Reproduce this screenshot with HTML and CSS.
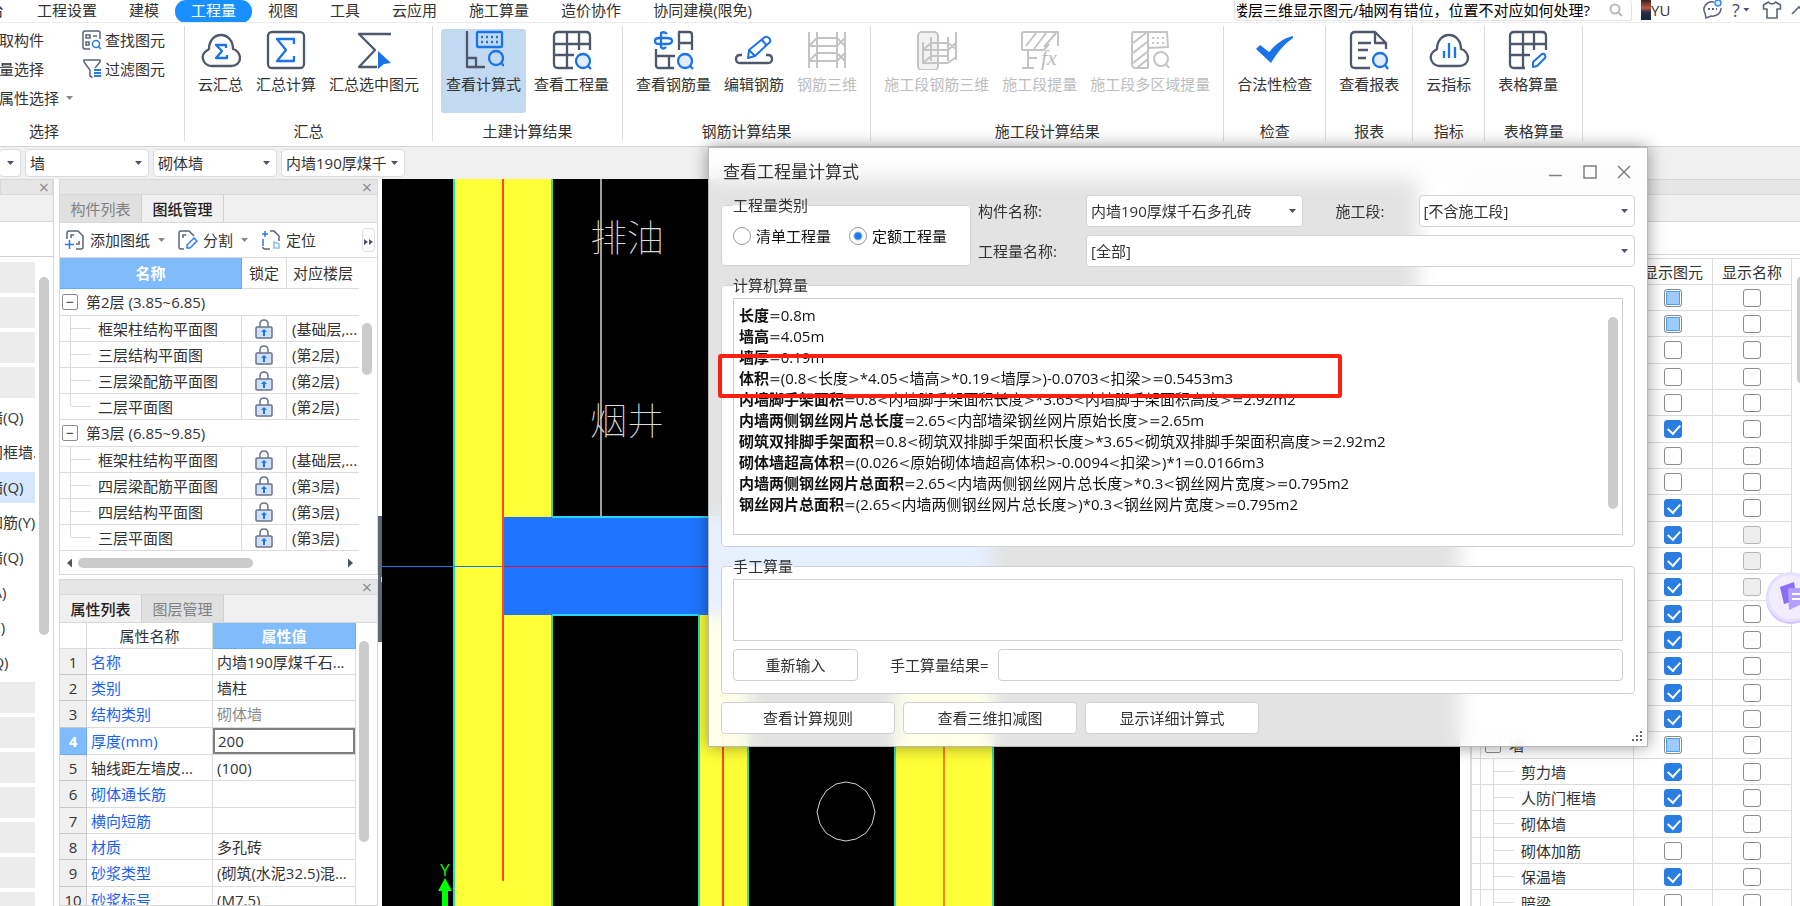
FILE: index.html
```html
<!DOCTYPE html>
<html lang="zh-CN">
<head>
<meta charset="utf-8">
<title>查看工程量计算式</title>
<link rel="stylesheet" href="styles.css">
</head>
<body>
<div class="app">
<header class="menubar">
  <nav class="menu">
    <a class="menu-item cut" href="#">台</a>
    <a class="menu-item" href="#">工程设置</a>
    <a class="menu-item" href="#">建模</a>
    <a class="menu-item active" href="#">工程量</a>
    <a class="menu-item" href="#">视图</a>
    <a class="menu-item" href="#">工具</a>
    <a class="menu-item" href="#">云应用</a>
    <a class="menu-item" href="#">施工算量</a>
    <a class="menu-item" href="#">造价协作</a>
    <a class="menu-item" href="#">协同建模(限免)</a>
  </nav>
  <div class="search">
    <span class="search-text">楼层三维显示图元/轴网有错位，位置不对应如何处理?</span>
    <svg width="14" height="14" viewBox="0 0 14 14" fill="none" stroke="#b9b9b9" stroke-width="2"><circle cx="6" cy="6" r="4.5"/><path d="M9.5 9.5 13 13"/></svg>
  </div>
  <div class="user">
    <span class="avatar"></span><span>YU</span>
  </div>
  <div class="tools">
    <svg width="22" height="22" viewBox="0 0 22 22" fill="none" stroke="#5b6478" stroke-width="1.5"><path d="M13 3A8.500 7.500 0 0 0 4 14l1 5 5-2a8.500 7.500 0 0 0 10-8"/><circle cx="17" cy="4" r="3" stroke="#3a8cf0" fill="#d8e8fd"/><path d="M7 10h2M11 10h2M15 10h1" stroke-width="2"/></svg>
    <span class="help">?</span><span class="caret"></span>
    <svg class="shirt" width="20" height="20" viewBox="0 0 20 20" fill="none" stroke="#5b6478" stroke-width="1.6" stroke-linejoin="round"><path d="M6.500 2 1.500 5v4H5v9h10V9h3.500V5l-5-3c-1 2.500-6 2.500-7 0z"/></svg>
    <svg width="14" height="14" viewBox="0 0 14 14" fill="none" stroke="#5b6478" stroke-width="1.600"><path d="M1 11 8 4l7 7"/></svg>
  </div>
</header>

<section class="ribbon">
  <div class="group group-select">
    <div class="select-cols">
      <div class="select-col cutoff">
        <button class="small">拾取构件</button>
        <button class="small">批量选择</button>
        <button class="small">按属性选择<span class="caret gray"></span></button>
      </div>
      <div class="select-col">
        <button class="small"><svg width="20" height="20" viewBox="0 0 20 20" fill="none" stroke="#5b6478" stroke-width="1.500"><path d="M8 19H3q-2 0-2-2V3q0-2 2-2h13q2 0 2 2v6"/><path d="M4 5h4v3H4zM4 12h3v3H4zM11 6h4"/><circle cx="14" cy="14" r="3.500" stroke="#2a7bea"/><path d="m16.500 16.500 2.500 2.500" stroke="#2a7bea"/></svg>查找图元</button>
        <button class="small"><svg width="20" height="20" viewBox="0 0 20 20" fill="none" stroke="#5b6478" stroke-width="1.500"><path d="M10.500 18.500 8 17v-6L2 3V1h16v2l-5 6"/><path d="M12 11h7M12 14h7M12 17h7" stroke="#2a7bea" stroke-width="2"/></svg>过滤图元</button>
      </div>
    </div>
    <p class="group-label">选择</p>
  </div>

  <div class="group">
    <div class="buttons">
      <button class="big"><svg class="icon" viewBox="0 0 40 40"><path d="M11 36C3 36-1 27 4 22c1-1 3-2 4-3C8 11 13 5 20 5s12 6 12 14c4 1 7 5 7 9 0 5-4 8-9 8z"/><path class="blue" d="M25 18v-3H15l6 6-6 7h11v-3"/></svg>云汇总</button>
      <button class="big"><svg class="icon" viewBox="0 0 40 40"><rect x="2" y="2" width="36" height="36" rx="4"/><path class="blue" d="M28 14V9H11l9 11-9 11h17v-5"/></svg>汇总计算</button>
      <button class="big"><svg class="icon" viewBox="0 0 40 40"><path d="M37 4H5l16 16L5 37h18"/><path class="fill" d="m24 21 13 12-7 1-6 5z"/></svg>汇总选中图元</button>
    </div>
    <p class="group-label">汇总</p>
  </div>

  <div class="group">
    <div class="buttons">
      <button class="big pressed"><svg class="icon" viewBox="0 0 40 40"><path d="M3 1v36h18M3 28h9v9"/><g class="blue"><rect x="13" y="2" width="25" height="15" rx="1"/><path d="M17 7h18M17 12h18" stroke-dasharray="2 3"/><circle cx="32" cy="28" r="7"/><path d="m37 33 3 3"/></g></svg>查看计算式</button>
      <button class="big"><svg class="icon" viewBox="0 0 40 40"><path d="M21 38H6q-4 0-4-4V6q0-4 4-4h28q4 0 4 4v14M2 14h36M2 25h20M15 2v36M27 2v18"/><g class="blue tint"><circle cx="31" cy="31" r="7"/><path d="m36 36 3 3"/></g></svg>查看工程量</button>
    </div>
    <p class="group-label">土建计算结果</p>
  </div>

  <div class="group">
    <div class="buttons">
      <button class="big"><svg class="icon" viewBox="0 0 40 40"><path d="M25 20V2h10q3 0 3 3v15M25 13h13M2 19v16q0 3 3 3h15M2 26h19M15 26v12"/><g class="blue"><path d="M5 8h8q5 0 5 3t-5 3H5q-4 0-4-3t4-3M13 4q-3-3-6-1v14q2 3 5 0"/></g><g class="blue tint"><circle cx="31" cy="31" r="7"/><path d="m36 36 3 3"/></g></svg>查看钢筋量</button>
      <button class="big"><svg class="icon" viewBox="0 0 40 40"><path d="M8 25H6q-4 0-4 4t4 4h28q4 0 4-4t-4-4h-2"/><path class="blue thin" d="m14 28 1-8L31 7q2-1 4 1t1 4L21 26zM28 10l5 6M15 20l6 6"/></svg>编辑钢筋</button>
      <button class="big" disabled><svg class="icon off" viewBox="0 0 40 40"><path d="M2 2v36M10 2v36M30 2v36M38 2v36M10 8h20l8 8M2 16h28M10 23h20l8 8M2 31h28M10 8l-8 8M10 23l-8 8M30 16l8-8M30 31l8-8"/></svg>钢筋三维</button>
    </div>
    <p class="group-label">钢筋计算结果</p>
  </div>

  <div class="group">
    <div class="buttons">
      <button class="big" disabled><svg class="icon off" viewBox="0 0 40 40"><rect x="1" y="2" width="20" height="38" rx="4" fill="#f2f2f2"/><path d="M6 12v22M14 7v24M31 7v24M39 2v28M14 13h17l8 6M6 20h25M14 26h17M6 33h25M14 13l-8 7M14 26l-8 7M31 20l8-7M31 33l8-6"/></svg>施工段钢筋三维</button>
      <button class="big" disabled><svg class="icon off" viewBox="0 0 40 40"><path d="M2 20V4q0-2 2-2h34v14M2 20h22l5-6M6 16 16 3M14 19 26 3M24 17 36 3M8 20v18M2 38h12M8 28h9"/><text class="fx" x="21" y="35">fx</text></svg>施工段提量</button>
      <button class="big" disabled><svg class="icon off" viewBox="0 0 40 40"><path d="M18 2H4Q2 2 2 4v30q0 4 4 4h12zM18 2h19l1 15-20 1M3 13 16 3M3 23l14-11M3 33l14-11M8 37l10-8"/><path d="M22 8h14M22 13h14" stroke-dasharray="2 3"/><circle cx="31" cy="29" r="7"/><path d="m36 34 3 4"/></svg>施工段多区域提量</button>
    </div>
    <p class="group-label">施工段计算结果</p>
  </div>

  <div class="group">
    <div class="buttons">
      <button class="big"><svg class="icon" viewBox="0 0 40 40"><path class="fill" d="m1 19 4-4 9 7C20 15 28 8 38 6v2C29 14 22 23 16 33z"/></svg>合法性检查</button>
    </div>
    <p class="group-label">检查</p>
  </div>
  <div class="group">
    <div class="buttons">
      <button class="big"><svg class="icon" viewBox="0 0 40 40"><path d="M21 38H6q-4 0-4-4V6q0-4 4-4h20l11 11v6M26 3v10h11M9 13h13M9 20h10M9 28h8"/><g class="blue tint"><circle cx="31" cy="30" r="7"/><path d="m36 35 3 4"/></g></svg>查看报表</button>
    </div>
    <p class="group-label">报表</p>
  </div>
  <div class="group">
    <div class="buttons">
      <button class="big"><svg class="icon" viewBox="0 0 40 40"><path d="M11 36C3 36-1 27 4 22c1-1 3-2 4-3C8 11 13 5 20 5s12 6 12 14c4 1 7 5 7 9 0 5-4 8-9 8z"/><path class="blue" d="M15 28v-7M20 28V13M26 28V17"/></svg>云指标</button>
    </div>
    <p class="group-label">指标</p>
  </div>
  <div class="group group-last">
    <div class="buttons">
      <button class="big"><svg class="icon" viewBox="0 0 40 40"><path d="M17 38H6q-4 0-4-4V6q0-4 4-4h28q4 0 4 4v14M2 14h36M2 25h20M15 2v36M26 2v18"/><path class="blue thin" d="M25 37v-5l9-8q2-1 3 1t0 3l-8 8z"/></svg>表格算量</button>
    </div>
    <p class="group-label">表格算量</p>
  </div>
</section>

<div class="filters">
  <select class="pick first" aria-label="楼层"><option></option></select>
  <select class="pick" aria-label="构件大类"><option>墙</option></select>
  <select class="pick" aria-label="构件类型"><option>砌体墙</option></select>
  <select class="pick" aria-label="构件"><option>内墙190厚煤千石多孔砖</option></select>
</div>

<main class="main">
  <aside class="nav">
    <div class="strip"><button class="x" aria-label="关闭">×</button></div>
    <div class="nav-bar"></div>
    <div class="nav-gap"></div>
    <div class="nav-body">
      <ul class="nav-list">
        <li class="blank"></li><li class="blank"></li><li class="blank"></li><li class="blank"></li>
        <li>剪力墙(Q)</li><li>人防门框墙...</li><li class="on">砌体墙(Q)</li><li>砌体加筋(Y)</li><li>保温墙(Q)</li><li>暗梁(A)</li><li>墙垛(E)</li><li>幕墙(Q)</li>
        <li class="blank"></li><li class="blank"></li><li class="blank"></li><li class="blank"></li><li class="blank"></li><li class="blank"></li><li class="blank"></li>
      </ul>
      <span class="vbar nav-scroll"></span>
    </div>
  </aside>

  <div class="panels">
    <section class="panel">
      <div class="strip"><button class="x" aria-label="关闭">×</button></div>
      <div class="tabs"><button class="tab">构件列表</button><button class="tab current">图纸管理</button></div>
      <div class="panel-tools">
        <button class="small"><svg width="20" height="20" viewBox="0 0 20 20" fill="none" stroke="#5b6478" stroke-width="1.500"><path d="M2 9V3q0-2 2-2h9l5 5v11q0 2-2 2h-5M6 8V5h3M14 11v3h-3"/><path d="M0 14.500h9M4.500 10v9" stroke="#2a7bea"/></svg>添加图纸<span class="caret gray"></span></button>
        <button class="small"><svg width="20" height="20" viewBox="0 0 20 20" fill="none" stroke="#5b6478" stroke-width="1.500"><path d="M6 19H3q-2 0-2-2V3q0-2 2-2h8l5 5M5 8V5h3"/><path d="M9 18v-3l7-7 3 3-7 7z" stroke="#2a7bea"/></svg>分割<span class="caret gray"></span></button>
        <button class="small"><svg width="20" height="20" viewBox="0 0 20 20" fill="none" stroke="#5b6478" stroke-width="1.500"><path d="M9 1h4l5 5v5M9 19H4q-2 0-2-2"/><path d="M2 9v7M1 4h6M4 1v6" stroke="#2a7bea"/><path d="M13 12v6h5v-4z" stroke="#8fbdf5"/></svg>定位</button>
        <button class="more" aria-label="更多"><svg width="10" height="8" viewBox="0 0 10 8" fill="#4b5468"><path d="M0 1l4 3-4 3zM5 1l4 3-4 3z"/></svg></button>
      </div>
      <div class="sheet-area">
        <table class="sheet">
          <colgroup><col class="c-name"><col class="c-lock"><col class="c-floor"></colgroup>
          <thead><tr><th class="hot">名称</th><th>锁定</th><th>对应楼层</th></tr></thead>
          <tbody>
            <tr class="branch"><td colspan="3"><span class="fold">−</span>第2层 (3.85~6.85)</td></tr>
            <tr><td class="leaf">框架柱结构平面图</td><td class="lock"><svg viewBox="0 0 18 20"><use href="#lock"/></svg></td><td>(基础层,...</td></tr>
            <tr><td class="leaf">三层结构平面图</td><td class="lock"><svg viewBox="0 0 18 20"><use href="#lock"/></svg></td><td>(第2层)</td></tr>
            <tr><td class="leaf">三层梁配筋平面图</td><td class="lock"><svg viewBox="0 0 18 20"><use href="#lock"/></svg></td><td>(第2层)</td></tr>
            <tr><td class="leaf end">二层平面图</td><td class="lock"><svg viewBox="0 0 18 20"><use href="#lock"/></svg></td><td>(第2层)</td></tr>
            <tr class="branch"><td colspan="3"><span class="fold">−</span>第3层 (6.85~9.85)</td></tr>
            <tr><td class="leaf">框架柱结构平面图</td><td class="lock"><svg viewBox="0 0 18 20"><use href="#lock"/></svg></td><td>(基础层,...</td></tr>
            <tr><td class="leaf">四层梁配筋平面图</td><td class="lock"><svg viewBox="0 0 18 20"><use href="#lock"/></svg></td><td>(第3层)</td></tr>
            <tr><td class="leaf">四层结构平面图</td><td class="lock"><svg viewBox="0 0 18 20"><use href="#lock"/></svg></td><td>(第3层)</td></tr>
            <tr><td class="leaf end">三层平面图</td><td class="lock"><svg viewBox="0 0 18 20"><use href="#lock"/></svg></td><td>(第3层)</td></tr>
          </tbody>
        </table>
        <span class="vbar sheet-scroll"></span>
      </div>
      <div class="hscroll"><span class="arrow left"></span><span class="hbar"></span><span class="arrow right"></span></div>
    </section>

    <section class="panel props-panel">
      <div class="strip"><button class="x" aria-label="关闭">×</button></div>
      <div class="tabs"><button class="tab current">属性列表</button><button class="tab">图层管理</button></div>
      <div class="sheet-area">
        <table class="props">
          <colgroup><col class="c-num"><col class="c-key"><col class="c-val"></colgroup>
          <thead><tr><th></th><th>属性名称</th><th class="hot">属性值</th></tr></thead>
          <tbody>
            <tr><th>1</th><td class="key">名称</td><td>内墙190厚煤千石...</td></tr>
            <tr><th>2</th><td class="key">类别</td><td>墙柱</td></tr>
            <tr><th>3</th><td class="key">结构类别</td><td class="dim">砌体墙</td></tr>
            <tr><th class="hot">4</th><td class="key">厚度(mm)</td><td class="edit"><input class="cell-input" aria-label="厚度(mm)" value="200"></td></tr>
            <tr><th>5</th><td>轴线距左墙皮...</td><td>(100)</td></tr>
            <tr><th>6</th><td class="key">砌体通长筋</td><td></td></tr>
            <tr><th>7</th><td class="key">横向短筋</td><td></td></tr>
            <tr><th>8</th><td class="key">材质</td><td>多孔砖</td></tr>
            <tr><th>9</th><td class="key">砂浆类型</td><td>(砌筑(水泥32.5)混...</td></tr>
            <tr><th>10</th><td class="key">砂浆标号</td><td>(M7.5)</td></tr>
          </tbody>
        </table>
        <span class="vbar props-scroll"></span>
      </div>
    </section>
  </div>

  <div class="splitter"><span class="handle"></span></div>

  <div class="canvas">
    <svg class="drawing" width="1080" height="728" viewBox="382 179 1080 728" fill="none">
      <path fill="#ffff38" d="M455 179h97v728h-97zM699 615h49v292h-49zM896 615h97v292h-97z"/>
      <path stroke="#28e0b8" stroke-width="2" d="M454 179v728M552 179v338M552 615v292M699 615v292M748 615v292M895 615v292M993 615v292"/>
      <path stroke="#a0a0a0" stroke-width="2" d="M601 179v338"/>
      <path fill="#1f75ff" d="M503 517h489v98H503z"/>
      <path stroke="#28d8f8" stroke-width="2" d="M552 517h440M552 615h147M748 615h147"/>
      <path stroke="#0a78ff" d="M382 566.500h121"/>
      <path stroke="#e01030" d="M503 566.500h489"/>
      <path stroke="#ff4a20" stroke-width="2" d="M503 179v702M723 615v292"/>
      <path stroke="#ff8020" stroke-width="2" d="M944 615v292"/>
      <path stroke="#d0d0d0" d="m846 782 10 2 10 7 6 10 3 11-3 12-6 9-10 6-10 2-10-2-10-6-6-9-3-12 3-11 6-10 10-7z"/>
      <path fill="#00ff00" d="m445 878 7 13h-4v16h-6v-16h-4z"/>
      <text class="axis" x="445" y="876">Y</text>
      <text class="cad" x="590" y="252">排油</text>
      <text class="cad" x="590" y="435">烟井</text>
      <path fill="#fff" d="M1418 179h44v340h-44z"/>
    </svg>
  </div>

  <aside class="display">
    <div class="strip"></div>
    <div class="display-bar"></div>
    <div class="display-gap"></div>
    <table class="layers">
      <colgroup><col><col class="c-check"><col class="c-check"></colgroup>
      <thead><tr><th></th><th>显示图元</th><th>显示名称</th></tr></thead>
      <tbody>
        <tr><td></td><td><input type="checkbox" class="partial" aria-label="显示图元"></td><td><input type="checkbox" aria-label="显示名称"></td></tr>
        <tr><td></td><td><input type="checkbox" class="partial" aria-label="显示图元"></td><td><input type="checkbox" aria-label="显示名称"></td></tr>
        <tr><td></td><td><input type="checkbox" aria-label="显示图元"></td><td><input type="checkbox" aria-label="显示名称"></td></tr>
        <tr><td></td><td><input type="checkbox" aria-label="显示图元"></td><td><input type="checkbox" aria-label="显示名称"></td></tr>
        <tr><td></td><td><input type="checkbox" aria-label="显示图元"></td><td><input type="checkbox" aria-label="显示名称"></td></tr>
        <tr><td></td><td><input type="checkbox" checked aria-label="显示图元"></td><td><input type="checkbox" aria-label="显示名称"></td></tr>
        <tr><td></td><td><input type="checkbox" aria-label="显示图元"></td><td><input type="checkbox" aria-label="显示名称"></td></tr>
        <tr><td></td><td><input type="checkbox" aria-label="显示图元"></td><td><input type="checkbox" aria-label="显示名称"></td></tr>
        <tr><td></td><td><input type="checkbox" checked aria-label="显示图元"></td><td><input type="checkbox" aria-label="显示名称"></td></tr>
        <tr><td></td><td><input type="checkbox" checked aria-label="显示图元"></td><td><input type="checkbox" disabled aria-label="显示名称"></td></tr>
        <tr><td></td><td><input type="checkbox" checked aria-label="显示图元"></td><td><input type="checkbox" disabled aria-label="显示名称"></td></tr>
        <tr><td></td><td><input type="checkbox" checked aria-label="显示图元"></td><td><input type="checkbox" disabled aria-label="显示名称"></td></tr>
        <tr><td></td><td><input type="checkbox" checked aria-label="显示图元"></td><td><input type="checkbox" aria-label="显示名称"></td></tr>
        <tr><td></td><td><input type="checkbox" checked aria-label="显示图元"></td><td><input type="checkbox" aria-label="显示名称"></td></tr>
        <tr><td></td><td><input type="checkbox" checked aria-label="显示图元"></td><td><input type="checkbox" aria-label="显示名称"></td></tr>
        <tr><td></td><td><input type="checkbox" checked aria-label="显示图元"></td><td><input type="checkbox" aria-label="显示名称"></td></tr>
        <tr><td></td><td><input type="checkbox" checked aria-label="显示图元"></td><td><input type="checkbox" aria-label="显示名称"></td></tr>
        <tr><td class="parent"><span class="fold">−</span>墙</td><td><input type="checkbox" class="partial" aria-label="显示图元 墙"></td><td><input type="checkbox" aria-label="显示名称 墙"></td></tr>
        <tr><td class="child">剪力墙</td><td><input type="checkbox" checked aria-label="显示图元 剪力墙"></td><td><input type="checkbox" aria-label="显示名称 剪力墙"></td></tr>
        <tr><td class="child">人防门框墙</td><td><input type="checkbox" checked aria-label="显示图元 人防门框墙"></td><td><input type="checkbox" aria-label="显示名称 人防门框墙"></td></tr>
        <tr><td class="child">砌体墙</td><td><input type="checkbox" checked aria-label="显示图元 砌体墙"></td><td><input type="checkbox" aria-label="显示名称 砌体墙"></td></tr>
        <tr><td class="child">砌体加筋</td><td><input type="checkbox" aria-label="显示图元 砌体加筋"></td><td><input type="checkbox" aria-label="显示名称 砌体加筋"></td></tr>
        <tr><td class="child">保温墙</td><td><input type="checkbox" checked aria-label="显示图元 保温墙"></td><td><input type="checkbox" aria-label="显示名称 保温墙"></td></tr>
        <tr><td class="child">暗梁</td><td><input type="checkbox" aria-label="显示图元 暗梁"></td><td><input type="checkbox" aria-label="显示名称 暗梁"></td></tr>
      </tbody>
    </table>
    <span class="vbar layers-scroll"></span>
  </aside>
</main>

<section class="dialog" role="dialog" aria-labelledby="dialog-title">
  <div class="titlebar">
    <h1 id="dialog-title">查看工程量计算式</h1>
    <button class="win" aria-label="最小化"><svg width="14" height="14" viewBox="0 0 14 14"><path d="M0 10.500h13"/></svg></button>
    <button class="win" aria-label="最大化"><svg width="14" height="14" viewBox="0 0 14 14"><path d="M1 1h12v12H1z"/></svg></button>
    <button class="win" aria-label="关闭"><svg width="14" height="14" viewBox="0 0 14 14"><path d="m1 1 12 12M13 1 1 13"/></svg></button>
  </div>
  <div class="options">
    <fieldset class="kind">
      <legend>工程量类别</legend>
      <div class="radios">
        <label class="radio"><input type="radio" name="kind">清单工程量</label>
        <label class="radio"><input type="radio" name="kind" checked>定额工程量</label>
      </div>
    </fieldset>
    <div class="fields">
      <label for="part">构件名称:</label>
      <select class="pick" id="part"><option>内墙190厚煤千石多孔砖</option></select>
      <label class="stage" for="stage">施工段:</label>
      <select class="pick" id="stage"><option>[不含施工段]</option></select>
      <label for="quantity">工程量名称:</label>
      <select class="pick wide" id="quantity"><option>[全部]</option></select>
    </div>
  </div>
  <fieldset class="machine">
    <legend>计算机算量</legend>
    <div class="result">
      <div class="lines">
        <p><b>长度</b><i>=</i>0.8m</p>
        <p><b>墙高</b><i>=</i>4.05m</p>
        <p><b>墙厚</b><i>=</i>0.19m</p>
        <p><b>体积</b><i>=</i>(0.8<i>&lt;</i>长度<i>&gt;</i>*4.05<i>&lt;</i>墙高<i>&gt;</i>*0.19<i>&lt;</i>墙厚<i>&gt;</i>)-0.0703<i>&lt;</i>扣梁<i>&gt;=</i>0.5453m3</p>
        <p><b>内墙脚手架面积</b><i>=</i>0.8<i>&lt;</i>内墙脚手架面积长度<i>&gt;</i>*3.65<i>&lt;</i>内墙脚手架面积高度<i>&gt;=</i>2.92m2</p>
        <p><b>内墙两侧钢丝网片总长度</b><i>=</i>2.65<i>&lt;</i>内部墙梁钢丝网片原始长度<i>&gt;=</i>2.65m</p>
        <p><b>砌筑双排脚手架面积</b><i>=</i>0.8<i>&lt;</i>砌筑双排脚手架面积长度<i>&gt;</i>*3.65<i>&lt;</i>砌筑双排脚手架面积高度<i>&gt;=</i>2.92m2</p>
        <p><b>砌体墙超高体积</b><i>=</i>(0.026<i>&lt;</i>原始砌体墙超高体积<i>&gt;</i>-0.0094<i>&lt;</i>扣梁<i>&gt;</i>)*1<i>=</i>0.0166m3</p>
        <p><b>内墙两侧钢丝网片总面积</b><i>=</i>2.65<i>&lt;</i>内墙两侧钢丝网片总长度<i>&gt;</i>*0.3<i>&lt;</i>钢丝网片宽度<i>&gt;=</i>0.795m2</p>
        <p><b>钢丝网片总面积</b><i>=</i>(2.65<i>&lt;</i>内墙两侧钢丝网片总长度<i>&gt;</i>)*0.3<i>&lt;</i>钢丝网片宽度<i>&gt;=</i>0.795m2</p>
      </div>
      <span class="vbar result-scroll"></span>
    </div>
  </fieldset>
  <fieldset class="manual">
    <legend>手工算量</legend>
    <textarea class="formula" aria-label="手工算量"></textarea>
    <div class="manual-row">
      <button class="btn">重新输入</button>
      <label for="manual-result">手工算量结果=</label>
      <input class="text" id="manual-result">
    </div>
  </fieldset>
  <div class="actions">
    <button class="btn">查看计算规则</button>
    <button class="btn">查看三维扣减图</button>
    <button class="btn">显示详细计算式</button>
  </div>
  <svg class="grip" width="11" height="11" viewBox="0 0 11 11" fill="#666"><path d="M8 0h2v2H8zM8 4h2v2H8zM4 4h2v2H4zM8 8h2v2H8zM4 8h2v2H4zM0 8h2v2H0z"/></svg>
  <span class="marker"></span>
</section>

<button class="floating" aria-label="批注">
  <svg width="36" height="36" viewBox="0 0 36 36"><path fill="#8a6cf5" d="m4 8 14-5 3 18-13 4z"/><path fill="#b3a0fa" d="M12 11q0-2 2-2h20v22l-10-5-11 5z"/><path stroke="#fff" stroke-width="2" d="M16 15h14M16 20h10"/></svg>
</button>
</div>

<svg class="defs" width="0" height="0">
  <symbol id="lock" viewBox="0 0 18 20"><path fill="none" stroke="#6a7488" stroke-width="1.500" d="M5 8V5q0-4 4-4t4 4v3"/><rect x="1" y="8" width="16" height="11" rx="1" fill="#cfe0fb" stroke="#6a7488" stroke-width="1.500"/><path fill="#1a73e8" d="m9 10 3 3h-2v4H8v-4H6z"/></symbol>
</svg>
</body>
</html>
```

FILE: styles.css
```css
* { box-sizing: border-box; }
body, p, h1, ul { margin: 0; padding: 0; }
body, button, input, select, textarea {
  font-family: "Open Sans", "Noto Sans CJK SC", sans-serif;
  font-size: 15px;
  line-height: 20px;
  color: #333;
}
body { overflow: hidden; background: #fff; }
button { border: 0; padding: 0; background: none; white-space: nowrap; }
a { color: inherit; text-decoration: none; }
table { border-collapse: separate; border-spacing: 0; table-layout: fixed; }
td, th { padding: 0; font-weight: 400; white-space: nowrap; overflow: hidden; }
.defs { position: absolute; }
.app { display: flex; flex-direction: column; height: 100vh; overflow: hidden; position: relative; }

/* menu bar */
.menubar { display: flex; height: 23px; flex: none; border-bottom: 1px solid #ececec; overflow: hidden; }
.menu { display: flex; flex: 1; }
.menu-item { padding: 0 16px; height: 23px; line-height: 21px; white-space: nowrap; }
.menu-item.cut { width: 21px; padding: 0; text-indent: -11px; overflow: hidden; }
.menu-item.active { background: #1890ff; color: #fff; border-radius: 11px; }
.search { display: flex; align-items: center; width: 398px; height: 21px; padding: 0 8px 0 2px; border: 1px solid #e4e4e4; border-top: 0; border-radius: 3px; color: #000; justify-content: space-between; }
.search-text { width: 353px; overflow: hidden; white-space: nowrap; display: flex; justify-content: flex-end; line-height: 20px; }
.user { display: flex; margin-left: 9px; width: 60px; line-height: 20px; }
.avatar { width: 10px; height: 20px; background: linear-gradient(#3a2030, #c05a3a 40%, #23304c 60%, #1a2438); }
.tools { display: flex; align-items: center; width: 99px; height: 19px; overflow: hidden; }
.tools svg { flex: none; }
.help { margin-left: 9px; font-size: 18px; color: #4b5468; }
.shirt { margin: 0 9px 0 12px; }
.caret { display: inline-block; flex: none; width: 7px; height: 4px; background: #4b5468; clip-path: polygon(0 0, 100% 0, 50% 100%); margin-left: 3px; }
.caret.gray { background: #8a8a8a; }

/* ribbon */
.ribbon { display: flex; flex: none; height: 124px; padding: 3px 0 5px; border-bottom: 1px solid #d4d4d4; overflow: hidden; }
.group { display: flex; flex-direction: column; justify-content: space-between; padding: 3px 8px 0; border-right: 1px solid #dcdcdc; flex: none; }
.group-last { min-width: 98px; }
.group-label { text-align: center; line-height: 20px; }
.buttons { display: flex; gap: 3px; }
.big { display: flex; flex-direction: column; align-items: center; gap: 4px; height: 84px; padding: 1px 5px 0; border-radius: 3px; }
.big.pressed { background: #c2d9f2; }
.big:disabled { color: #bdbdbd; }
.icon { width: 40px; height: 40px; fill: none; stroke: #4f586b; stroke-width: 2.300; stroke-linejoin: round; }
.icon .blue { stroke: #1a73e8; }
.icon .tint { fill: #e3edfc; }
.icon .thin { stroke-width: 2; }
.icon .fill { fill: #1a73e8; stroke: none; }
.icon.off { stroke: #c4c4c4; stroke-width: 2; }
.icon .fx { font: italic 22px "Liberation Serif", serif; fill: #bdbdbd; stroke: none; }
.group-select { width: 185px; padding: 0; }
.group-select .group-label { text-align: left; padding-left: 29px; }
.select-cols { display: flex; gap: 9px; padding-top: 4px; }
.select-col { display: flex; flex-direction: column; gap: 9px; align-items: flex-start; }
.select-col.cutoff { margin-left: -16px; }
.small { display: flex; align-items: center; gap: 4px; height: 20px; }
.select-col:last-child .small { gap: 3px; }

/* drop-downs */
.pick {
  appearance: none; width: 124px; height: 28px; padding: 0 18px 0 4px; border: 1px solid #d8dce2; border-radius: 4px;
  background: #fff url("data:image/svg+xml,%3Csvg xmlns='http://www.w3.org/2000/svg' width='7' height='4'%3E%3Cpath d='M0 0h7L3.500 4z' fill='%234b5468'/%3E%3C/svg%3E") no-repeat right 6px center;
  overflow: hidden;
}
.filters { display: flex; gap: 4px; flex: none; height: 32px; padding-top: 2px; background: #f0f0f0; }
.filters .first { width: 21px; padding: 0; border-left: 0; }

/* working area */
.main { display: flex; flex: 1; min-height: 0; }
.strip { display: flex; justify-content: flex-end; align-items: center; height: 16px; padding-right: 4px; background: #e6e6e6; border: 1px solid #d8d8d8; flex: none; }
.x { width: 12px; font-size: 18px; line-height: 12px; color: #8c8c8c; }
.vbar { width: 10px; border-radius: 5px; background: #cbcbcb; flex: none; }
.nav { width: 54px; flex: none; border-right: 1px solid #d8d8d8; overflow: hidden; }
.nav .strip { padding-right: 2px; }
.nav-bar { height: 27px; background: #f0f0f0; border-bottom: 1px solid #d8d8d8; }
.nav-gap { height: 35px; border-bottom: 1px solid #d0d0d0; }
.nav-body { display: flex; gap: 4px; padding-top: 5px; }
.nav-list { width: 35px; list-style: none; display: flex; flex-direction: column; gap: 4px; }
.nav-list li { height: 31px; line-height: 31px; text-indent: -42px; overflow: hidden; white-space: nowrap; }
.nav-list .blank { background: #ececec; }
.nav-list .on { background: #d5e7fe; }
.nav-scroll { height: 358px; margin-top: 15px; }

.panels { width: 319px; margin-left: 5px; flex: none; display: flex; flex-direction: column; gap: 4px; }
.panel { border: 1px solid #d8d8d8; border-top: 0; display: flex; flex-direction: column; }
.panel .strip { margin: 0 -1px; }
.props-panel { flex: 1; min-height: 0; overflow: hidden; }
.tabs { display: flex; height: 28px; background: #f0f0f0; border-bottom: 1px solid #d8d8d8; flex: none; }
.tab { width: 82px; background: #e0e0e0; border: 1px solid #cccfd4; border-width: 0 1px 0 0; color: #808080; }
.tab.current { background: #f0f0f0; color: #222; font-weight: 500; }
.panel-tools { display: flex; align-items: center; height: 35px; padding: 0 2px 0 5px; border-bottom: 1px solid #d8d8d8; gap: 13px; }
.panel-tools .small { gap: 5px; }
.more { margin-left: auto; width: 13px; height: 24px; border: 1px solid #e0e0e0; border-radius: 4px; }
.sheet-area { display: flex; gap: 3px; }
.sheet { width: 299px; }
.c-name { width: 182px; }
.c-lock { width: 45px; }
.sheet th { height: 31px; border-right: 1px solid #dcdcdc; border-bottom: 1px solid #dcdcdc; }
.sheet th:last-child { border-right: 0; }
.sheet td { height: 26px; padding-left: 5px; border-bottom: 1px solid #dcdcdc; }
.sheet .branch td { height: 27px; padding-left: 2px; }
.sheet .leaf {
  padding-left: 38px; border-right: 1px solid #dcdcdc;
  background: linear-gradient(#dcdcdc, #dcdcdc) 10px 0 / 1px 100% no-repeat, linear-gradient(#dcdcdc, #dcdcdc) 11px 12px / 20px 1px no-repeat;
}
.sheet .leaf.end { background-size: 1px 12px, 20px 1px; }
.sheet .lock { padding: 0; text-align: center; border-right: 1px solid #dcdcdc; line-height: 0; }
.lock svg { width: 18px; height: 20px; }
.fold { display: inline-block; width: 16px; height: 16px; margin-right: 8px; border: 1px solid #8c8c8c; border-radius: 2px; line-height: 13px; text-align: center; font-size: 14px; background: #fff; vertical-align: 1px; }
.sheet .hot, .props .hot { background: #80bbfb; color: #fff; font-weight: 700; border-color: #6aaaf0; }
.sheet-scroll { height: 52px; margin-top: 65px; }
.hscroll { display: flex; align-items: center; height: 23px; padding: 1px 24px 0 7px; gap: 6px; }
.hbar { width: 175px; height: 10px; border-radius: 5px; background: #cbcbcb; }
.arrow { width: 5px; height: 9px; background: #4b5468; }
.arrow.left { clip-path: polygon(100% 0, 100% 100%, 0 50%); }
.arrow.right { clip-path: polygon(0 0, 100% 50%, 0 100%); margin-left: auto; }

.props { width: 296px; flex: none; }
.c-num { width: 27px; }
.c-key { width: 126px; }
.props th, .props td { height: 26px; border-right: 1px solid #dcdcdc; border-bottom: 1px solid #dcdcdc; }
.props td { padding-left: 4px; }
.props tbody tr:nth-child(3n) > * { height: 27px; }
.props tbody th { background: #f0f0f0; border-color: #c8c8c8; }
.props tbody .hot { background: #80bbfb; }
.props .key { color: #1a62f5; }
.props .dim { color: #8c8c8c; }
.props .edit { padding: 0; }
.cell-input { display: block; width: 100%; height: 26px; padding: 0 3px; border: 2px solid #7f7f7f; border-radius: 0; outline: 0; }
.props-scroll { height: 201px; margin-top: 18px; }

.splitter { width: 4px; flex: none; padding-top: 337px; }
.handle { display: block; width: 6px; height: 126px; background: linear-gradient(#d5d8dd, #d5d8dd) right center / 3px 5px no-repeat #5c6675; }
.canvas { flex: 1; min-width: 0; background: #000; overflow: hidden; }
.drawing { display: block; }
.axis { font-size: 17px; fill: #00ff00; text-anchor: middle; }
.cad { font-family: "Noto Sans CJK SC", sans-serif; font-weight: 100; font-size: 37px; fill: #dcdcdc; }

/* display settings */
.display { width: 340px; flex: none; display: grid; grid-template-columns: 332px 10px; grid-template-rows: 16px 27px 37px auto; overflow: hidden; align-content: start; }
.display .strip, .display-bar, .display-gap { grid-column: 1 / 3; }
.display-bar { background: #f0f0f0; border-bottom: 1px solid #d8d8d8; }
.display-gap { border-bottom: 1px solid #dcdcdc; box-shadow: inset 0 -3px #fff, inset 0 -4px #d8d8d8; }
.layers { margin-left: 10px; width: 322px; border-left: 2px solid #dcdcdc; }
.c-check { width: 79px; }
.layers th, .layers td { height: 26px; border-right: 1px solid #dcdcdc; border-bottom: 1px solid #dcdcdc; text-align: center; }
.layers tbody tr:nth-child(3n) > * { height: 27px; }
.layers td:first-child { text-align: left; }
.layers .parent { padding-left: 13px; background: linear-gradient(#dcdcdc, #dcdcdc) 8px 0 / 1px 100% no-repeat; }
.layers .child {
  padding-left: 49px;
  background: linear-gradient(#dcdcdc, #dcdcdc) 8px 0 / 1px 100% no-repeat, linear-gradient(#dcdcdc, #dcdcdc) 21px 0 / 1px 100% no-repeat, linear-gradient(#dcdcdc, #dcdcdc) 22px 12px / 20px 1px no-repeat;
}
.layers input { appearance: none; display: block; width: 18px; height: 18px; margin: 0 auto; border: 1px solid #8c8c8c; border-radius: 3px; background: #fff; }
.layers input:checked { border-color: #2a7de1; background: #2a7de1; }
.layers input:checked::after { content: ""; display: block; width: 6px; height: 10px; margin: 1px 0 0 5px; border: solid #fff; border-width: 0 2px 2px 0; transform: rotate(42deg); }
.layers input:disabled { background: #eee; border-color: #b4b4b4; }
.layers input.partial { background: #9ecbff; border: 1px solid #8c8c8c; box-shadow: inset 0 0 0 1px #fff, inset 0 0 0 2px #4a9cf5; }
.layers-scroll { margin: 17px 0 0 5px; height: 108px; }

/* calculation window */
.dialog {
  position: absolute; left: 708px; right: 152px; top: 147px; padding: 0 12px 12px; border: 1px solid #b8b8b8;
  background: rgba(255, 255, 255, .89); backdrop-filter: blur(10px); box-shadow: 0 0 16px rgba(0, 0, 0, .4);
}
.titlebar { display: flex; align-items: center; gap: 20px; height: 47px; padding: 1px 4px 0 2px; }
.titlebar h1 { flex: 1; font-size: 17px; font-weight: 400; line-height: 24px; }
.win { width: 14px; height: 14px; }
.win svg { display: block; fill: none; stroke: #808080; stroke-width: 1.500; }
fieldset { margin: 0; padding: 0 11px; border: 1px solid #d0d0d0; border-radius: 4px; background: #fff; min-width: 0; }
legend { padding: 0; line-height: 20px; height: 20px; }
.options { display: flex; gap: 7px; }
.kind { width: 250px; height: 71px; }
.radios { display: flex; gap: 18px; padding-top: 11px; }
.radio { display: flex; align-items: center; gap: 5px; color: #111; white-space: nowrap; }
.radio input { appearance: none; flex: none; width: 18px; height: 18px; margin: 0; border: 1px solid #9a9a9a; border-radius: 50%; background: #fff; }
.radio input:checked { background: radial-gradient(circle, #1f7ae8 3px, #fff 5px); }
.fields { flex: 1; display: grid; grid-template-columns: 108px 1fr 116px 1fr; row-gap: 8px; align-items: center; }
.fields .pick { width: 100%; height: 32px; border-color: #cfd3da; }
.fields .wide { grid-column: 2 / 5; }
.stage { padding-left: 33px; }
.machine { margin-top: 8px; padding-bottom: 11px; }
.result { display: flex; justify-content: space-between; height: 237px; margin-top: 3px; padding: 6px 4px 6px 5px; border: 1px solid #cfcfcf; background: #fff; }
.lines { color: #111; line-height: 21px; white-space: nowrap; }
.lines p { height: 21px; }
.lines i { font-family: "DejaVu Sans", sans-serif; font-size: 14px; font-style: normal; line-height: 1; color: #444; }
.result-scroll { height: 192px; margin-top: 12px; }
.manual { margin-top: 9px; padding-bottom: 12px; }
.formula { display: block; width: 100%; height: 62px; margin: 3px 0 8px; border: 1px solid #cfcfcf; resize: none; }
.manual-row { display: flex; align-items: center; }
.manual-row .btn { width: 125px; margin-right: 32px; }
.btn { height: 32px; border: 1px solid #d0d0d0; border-radius: 4px; background: #fff; }
.text { flex: 1; height: 32px; margin-left: 9px; border: 1px solid #cfcfcf; border-radius: 4px; }
.actions { display: flex; gap: 8px; margin-top: 8px; }
.actions .btn { width: 174px; }
.grip { position: absolute; right: 4px; bottom: 4px; }
.marker { position: absolute; left: 9px; top: 206px; width: 624px; height: 44px; border: 4px solid #ff1e10; border-radius: 3px; }

.floating { position: absolute; right: -16px; top: 572px; width: 50px; height: 50px; border-radius: 50%; background: #f1edff; border: 3px solid #e6dfff; box-shadow: 0 2px 0 #cfc3fb; padding: 4px 0 0 6px; }
```
